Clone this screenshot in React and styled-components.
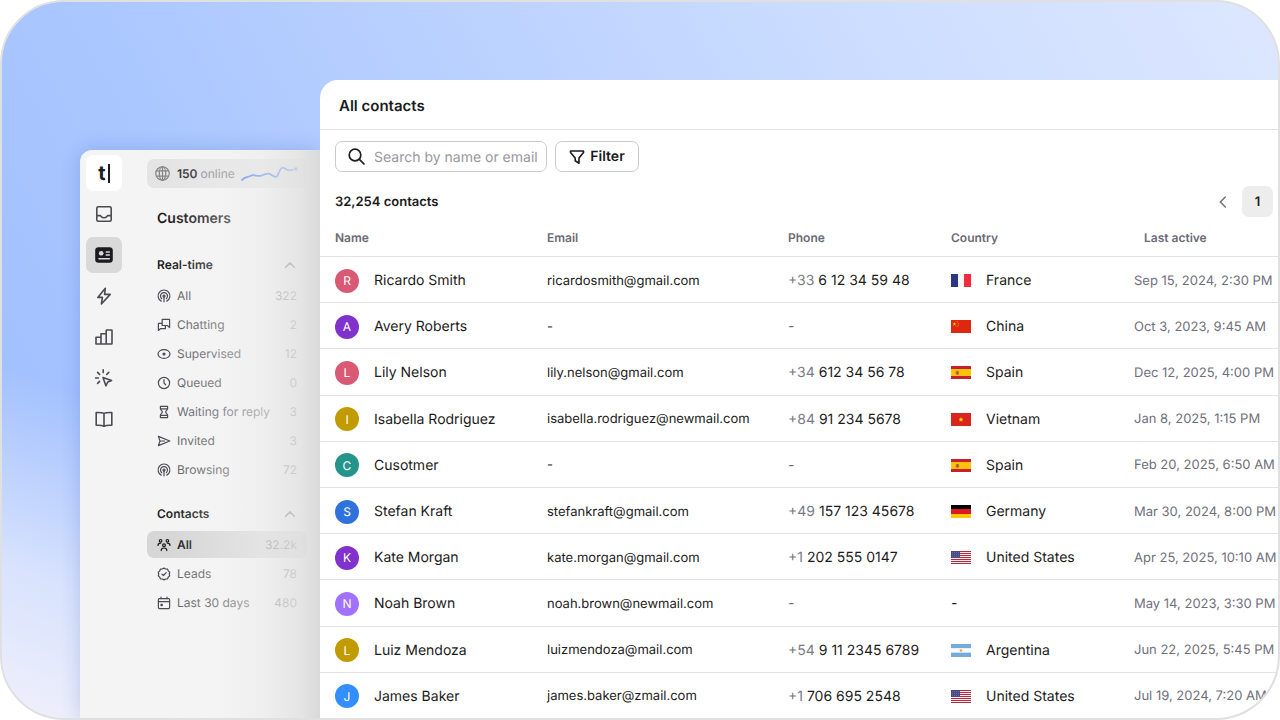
import React from "react";
import styled, { createGlobalStyle } from "styled-components";

const GlobalStyle = createGlobalStyle`
  * {
    box-sizing: border-box;
  }

  body {
    margin: 0;
    background: #ffffff;
    color: #1b1b20;
    font-family: Inter, "Liberation Sans", sans-serif;
    font-size: 14px;
    text-rendering: geometricPrecision;
  }

  button,
  input {
    font-family: inherit;
    text-rendering: inherit;
  }
`;

const Frame = styled.div`
  display: flex;
  height: 100vh;
  padding: 78px 0 0 78px;
  overflow: hidden;
  border: 2px solid #e0e0e0;
  border-radius: 64px;
  background: linear-gradient(
      200deg,
      rgba(238, 239, 251, 0) 70%,
      rgba(226, 233, 253, 0.85) 87%,
      #f0f0fb 100%
    ),
    linear-gradient(60deg, #a1c0ff 10%, #a9c6ff 27%, #cfdfff 78%, #dde7ff 100%);
`;

const Side = styled.aside`
  position: relative;
  display: flex;
  flex: 0 0 240px;
  gap: 25px;
  margin-top: 70px;
  padding-left: 6px;
  border-top-left-radius: 12px;
  background: #f4f4f4;
  box-shadow: 0 0 20px rgba(30, 60, 150, 0.2);

  /* shade thrown by the contacts panel */
  &::after {
    content: "";
    position: absolute;
    inset: 0;
    pointer-events: none;
    background: linear-gradient(
      90deg,
      rgba(244, 244, 244, 0) 36%,
      rgba(242, 242, 242, 0.3) 60%,
      rgba(236, 236, 236, 0.62) 76%,
      rgba(226, 226, 226, 0.84) 92%,
      rgba(216, 216, 216, 0.96) 100%
    );
  }
`;

const Rail = styled.nav`
  display: flex;
  flex-direction: column;
  gap: 5px;
  padding-top: 5px;
`;

const RailButton = styled.button`
  display: flex;
  align-items: center;
  justify-content: center;
  width: 36px;
  height: 36px;
  padding: 0;
  border: none;
  border-radius: 7px;
  color: #4c4c50;
  background: ${(props) => (props.$active ? "#d9d9d9" : "transparent")};
  cursor: pointer;
`;

const Logo = styled.a`
  display: flex;
  align-items: center;
  justify-content: center;
  gap: 2px;
  width: 36px;
  height: 36px;
  border-radius: 7px;
  background: #ffffff;
  color: #1b1b20;
  font-size: 20px;
  font-weight: 700;
  line-height: 24px;
  text-decoration: none;

  &::after {
    content: "";
    width: 2px;
    height: 19px;
    background: #1b1b20;
  }
`;

const Menu = styled.div`
  flex: 0 0 160px;
  padding-top: 9px;
`;

const Online = styled.div`
  display: flex;
  align-items: center;
  height: 29px;
  padding-left: 8px;
  border-radius: 7px;
  background: #e4e4e4;
  color: #85858a;
  font-size: 12px;
  white-space: nowrap;

  b {
    margin: 0 3px 0 7px;
    color: #2c2c30;
    font-weight: 600;
  }

  svg:last-child {
    margin-left: 6px;
  }
`;

const MenuTitle = styled.h2`
  margin: 21px 10px 26px;
  font-size: 14px;
  font-weight: 600;
  line-height: 20px;
`;

const GroupHead = styled.h3`
  display: flex;
  align-items: center;
  justify-content: space-between;
  margin: 21px 10px 7px;
  font-size: 12px;
  font-weight: 600;
  line-height: 20px;
`;

const FoldButton = styled.button`
  display: flex;
  padding: 0;
  border: none;
  background: none;
  color: #4c4c50;
  cursor: pointer;
`;

const List = styled.ul`
  display: flex;
  flex-direction: column;
  gap: 2px;
  margin: 0;
  padding: 0;
  list-style: none;
`;

const Item = styled.a`
  display: flex;
  align-items: center;
  gap: 6px;
  height: 27px;
  padding: 0 10px;
  border-radius: 7px;
  background: ${(props) => (props.$active ? "#d6d6d6" : "transparent")};
  color: ${(props) => (props.$active ? "#1b1b20" : "#5e5e64")};
  font-size: 12px;
  font-weight: ${(props) => (props.$active ? 600 : 400)};
  text-decoration: none;
  white-space: nowrap;

  svg {
    flex: none;
    color: ${(props) => (props.$active ? "#1b1b20" : "#4a4a55")};
  }
`;

const Count = styled.span`
  margin-left: auto;
  color: #6f6f75;
  font-weight: 400;
`;

const Panel = styled.main`
  position: relative;
  display: flex;
  flex: 1;
  flex-direction: column;
  min-width: 0;
  border-top-left-radius: 18px;
  background: #ffffff;
`;

const PanelHeader = styled.header`
  flex: none;
  padding: 14px 19px 11px;
  border-bottom: 1px solid #e3e3e3;

  h1 {
    margin: 0;
    font-size: 15px;
    font-weight: 600;
    line-height: 24px;
  }
`;

const Toolbar = styled.div`
  display: flex;
  flex: none;
  gap: 8px;
  padding: 11px 15px 0;
`;

const SearchBox = styled.label`
  display: flex;
  align-items: center;
  gap: 8px;
  width: 212px;
  height: 31px;
  padding: 0 8px 0 11px;
  border: 1px solid #cbcbce;
  border-radius: 7px;
`;

const SearchInput = styled.input`
  flex: 1;
  min-width: 0;
  padding: 1px 0 0;
  border: none;
  outline: none;
  background: none;
  font-size: 14px;

  &::placeholder {
    color: #97979e;
    opacity: 1;
  }
`;

const FilterButton = styled.button`
  display: flex;
  align-items: center;
  justify-content: center;
  gap: 5px;
  width: 84px;
  height: 31px;
  padding: 0;
  border: 1px solid #cbcbce;
  border-radius: 7px;
  background: #ffffff;
  color: #1b1b20;
  font-size: 14px;
  font-weight: 600;
  cursor: pointer;
`;

const Summary = styled.div`
  display: flex;
  flex: none;
  align-items: center;
  justify-content: space-between;
  margin-top: 14px;
  padding: 0 5px 0 15px;

  strong {
    font-size: 13px;
    font-weight: 600;
  }
`;

const Pager = styled.div`
  display: flex;
  align-items: center;
  gap: 4px;
`;

const PageButton = styled.button`
  display: flex;
  align-items: center;
  justify-content: center;
  width: 31px;
  height: 31px;
  padding: 0;
  border: none;
  border-radius: 7px;
  background: ${(props) => (props.$active ? "#ededed" : "transparent")};
  color: ${(props) => (props.$active ? "#1b1b20" : "#77777c")};
  font-size: 13px;
  font-weight: 600;
  cursor: pointer;
`;

const Table = styled.table`
  flex: 1;
  width: 100%;
  margin-bottom: -1px;
  table-layout: fixed;
  border-collapse: separate;
  border-spacing: 0;
  white-space: nowrap;
`;

const HeadCell = styled.th`
  width: ${(props) => props.$width || "auto"};
  height: 40px;
  padding: 2px 0 0 ${(props) => props.$indent || 0};
  border-bottom: 1px solid #e3e3e3;
  color: #6a6a76;
  font-size: 12px;
  font-weight: 600;
  text-align: left;
`;

const Cell = styled.td`
  height: 46px;
  padding: 2px 0 0 ${(props) => props.$indent || 0};
  border-bottom: 1px solid #e3e3e3;
  color: ${(props) => (props.$muted ? "#6f6f7b" : "#1b1b20")};
  font-size: ${(props) => (props.$compact ? "13px" : "14px")};
`;

const Person = styled.div`
  display: flex;
  align-items: center;
  gap: 15px;
`;

const Avatar = styled.span`
  display: flex;
  flex: none;
  align-items: center;
  justify-content: center;
  width: 24px;
  height: 24px;
  border-radius: 50%;
  background: ${(props) => props.$color};
  color: #ffffff;
  font-size: 12px;
  font-weight: 400;
`;

const Prefix = styled.span`
  color: #7a7a85;
`;

const Icon = ({ size = 20, box = 20, width = 1.6, children }) => (
  <svg
    width={size}
    height={size}
    viewBox={`0 0 ${box} ${box}`}
    fill="none"
    stroke="currentColor"
    strokeWidth={width}
    strokeLinecap="round"
    strokeLinejoin="round"
    aria-hidden="true"
  >
    {children}
  </svg>
);

const railItems = [
  {
    label: "Inbox",
    icon: (
      <>
        <rect x="2.8" y="2.8" width="14.4" height="14.4" rx="1.5" />
        <path d="M3 11.6h3.2c.8 0 .9 2.2 3.8 2.2s3-2.2 3.8-2.2H17" />
      </>
    ),
  },
  {
    label: "Customers",
    active: true,
    icon: (
      <>
        <rect x="2" y="3" width="16" height="14" rx="2.5" fill="#1b1b20" stroke="#1b1b20" />
        <circle cx="7.2" cy="8.3" r="2.3" fill="#d9d9d9" stroke="none" />
        <path d="M12.3 7h3M12.3 10h3M5 13.7h10.3" stroke="#d9d9d9" />
      </>
    ),
  },
  {
    label: "Automations",
    icon: <path d="M11.3 2.2 3.8 11.4h4.6l-1 6.6 8.8-9.6h-5.6z" />,
  },
  {
    label: "Reports",
    icon: (
      <path d="M2 17V10.2h5V17M7 10.2V6.8h5.2V17M12.2 6.8V3.6c0-.4.2-.6.6-.6h4.6c.4 0 .6.2.6.6v12.8c0 .4-.2.6-.6.6H2.6c-.4 0-.6-.2-.6-.6" />
    ),
  },
  {
    label: "Engage",
    icon: (
      <>
        <path d="M9.2 1.8v2.8M1.6 10h2.8M3.6 4.4l2 2M5.6 13.4l-2 2M14.8 4.4l-2 2" />
        <path d="m9 9.4 8.6 3-3.8 1.6-1.9 3.8z" />
      </>
    ),
  },
  {
    label: "Knowledge base",
    icon: (
      <path d="M10 4.6C8.6 3.5 6.8 3.4 2.2 3.5v12.8c4.2-.2 6.4.1 7.8 1 1.4-.9 3.6-1.2 7.8-1V3.5c-4.6-.1-6.4 0-7.8 1.1zm0 0v12.6" />
    ),
  },
];

const Radar = () => (
  <>
    <path d="M4.2 12.1a5.9 5.9 0 1 1 5.6 0" />
    <path d="M4.7 9.7a3.5 3.5 0 1 1 4.7-.1" />
    <circle cx="7" cy="7.1" r="1" />
    <path d="M7 8.2v4.6" />
  </>
);

const menuGroups = [
  {
    title: "Real-time",
    items: [
      { label: "All", count: "322", icon: <Radar /> },
      {
        label: "Chatting",
        count: "2",
        icon: (
          <path d="M5.2 1.4h7.4v8.2L10.4 7.5H5.2zM5 5.4H1.4v7.1l2-1.8h5V8" />
        ),
      },
      {
        label: "Supervised",
        count: "12",
        icon: (
          <>
            <ellipse cx="7" cy="7" rx="6" ry="4.4" />
            <circle cx="7" cy="7" r="1" fill="currentColor" />
          </>
        ),
      },
      {
        label: "Queued",
        count: "0",
        icon: (
          <>
            <circle cx="7" cy="7" r="5.6" />
            <path d="M7 3.7V7l1.7 1.9" />
          </>
        ),
      },
      {
        label: "Waiting for reply",
        count: "3",
        icon: (
          <path d="M3.4 1.4h7.2v2.4c0 1.4-2 2.2-2 3.2s2 1.8 2 3.2v2.4H3.4v-2.4c0-1.4 2-2.2 2-3.2s-2-1.8-2-3.2zM3.4 3.8h7.2M3.4 10.4h7.2" />
        ),
      },
      {
        label: "Invited",
        count: "3",
        icon: <path d="M1.4 2.4 12.8 7 1.4 11.6 3 7zM3 7h4.6" />,
      },
      { label: "Browsing", count: "72", icon: <Radar /> },
    ],
  },
  {
    title: "Contacts",
    items: [
      {
        label: "All",
        count: "32.2k",
        active: true,
        icon: (
          <>
            <circle cx="3.6" cy="2.8" r="1.3" />
            <circle cx="10.4" cy="2.8" r="1.3" />
            <circle cx="7" cy="7.2" r="1.4" />
            <path d="M1 7.4c0-1.4 1-2.2 2.6-2.2M13 7.4c0-1.4-1-2.2-2.6-2.2M4.2 12.6c0-1.6 1-2.6 2.8-2.6s2.8 1 2.8 2.6" />
          </>
        ),
      },
      {
        label: "Leads",
        count: "78",
        icon: (
          <>
            <path d="M7 1.1 8.7 2l1.9.2.7 1.7 1.4 1.3L12.3 7l.4 1.8-1.4 1.3-.7 1.7-1.9.2L7 12.9 5.3 12l-1.9-.2-.7-1.7-1.4-1.3L1.7 7l-.4-1.8 1.4-1.3.7-1.7L5.3 2z" />
            <path d="m4.9 7.1 1.5 1.4 2.8-2.8" />
          </>
        ),
      },
      {
        label: "Last 30 days",
        count: "480",
        icon: (
          <>
            <rect x="1.4" y="2.6" width="11.2" height="10" rx="1" />
            <path d="M1.4 5.7h11.2M4 1v1.6M10 1v1.6" />
            <rect x="4" y="8.4" width="1.2" height="1.2" />
          </>
        ),
      },
    ],
  },
];

const Stripes = ({ colors }) =>
  colors.map((color, i) => (
    <rect
      key={i}
      y={(13 / colors.length) * i}
      width="20"
      height={13 / colors.length}
      fill={color}
    />
  ));

const STAR = "M0-2 .5-.6H2L.8.2l.4 1.5L0 .8l-1.2.9.4-1.5L-2-.6h1.5z";

const flags = {
  France: (
    <>
      <rect width="20" height="13" fill="#f5f5f5" />
      <rect width="7" height="13" fill="#293784" />
      <rect x="13" width="7" height="13" fill="#ef2b3c" />
    </>
  ),
  China: (
    <>
      <rect width="20" height="13" fill="#df2710" />
      <path d={STAR} transform="translate(3.4 4)" fill="#fcd600" />
      <g fill="#f2a80c">
        <circle cx="6.2" cy="1.8" r=".5" />
        <circle cx="7.4" cy="3.2" r=".5" />
        <circle cx="7.4" cy="4.9" r=".5" />
        <circle cx="6.2" cy="6.2" r=".5" />
      </g>
    </>
  ),
  Spain: (
    <>
      <rect width="20" height="13" fill="#c8202c" />
      <rect y="3" width="20" height="7" fill="#fdc20c" />
      <rect x="4.6" y="5" width="3.6" height="3.8" rx="1" fill="#c77a35" />
      <path d="M6.4 5.2v3" stroke="#9a4a3c" strokeWidth="1" />
    </>
  ),
  Vietnam: (
    <>
      <rect width="20" height="13" fill="#db241d" />
      <path d={STAR} transform="translate(10 6.6)" fill="#ffee00" stroke="#ffee00" strokeWidth=".4" />
    </>
  ),
  Germany: (
    <>
      <rect width="20" height="13" fill="#000000" />
      <rect y="4" width="20" height="5" fill="#dd1a22" />
      <rect y="9" width="20" height="4" fill="#ffc800" />
    </>
  ),
  "United States": (
    <>
      <rect width="20" height="13" fill="#f6eeee" />
      <path
        d="M0 .5h20M0 2.5h20M0 4.5h20M0 6.5h20M0 8.5h20M0 10.5h20M0 12.5h20"
        stroke="#b22a3d"
      />
      <rect width="9" height="7" fill="#474a80" />
      <path d="M1 1.5h7M1 3.5h7M1 5.5h7" stroke="#7d80aa" strokeWidth=".7" strokeDasharray="1 1" />
    </>
  ),
  Argentina: (
    <>
      <Stripes colors={["#74aade", "#f7f9fb", "#74aade"]} />
      <circle cx="10" cy="6.5" r="1.3" fill="#eda83a" />
    </>
  ),
};

const contacts = [
  { name: "Ricardo Smith", email: "ricardosmith@gmail.com", prefix: "+33", phone: "6 12 34 59 48", country: "France", active: "Sep 15, 2024, 2:30 PM", color: "#d85a74" },
  { name: "Avery Roberts", country: "China", active: "Oct 3, 2023, 9:45 AM", color: "#8132cc" },
  { name: "Lily Nelson", email: "lily.nelson@gmail.com", prefix: "+34", phone: "612 34 56 78", country: "Spain", active: "Dec 12, 2025, 4:00 PM", color: "#d85a74" },
  { name: "Isabella Rodriguez", email: "isabella.rodriguez@newmail.com", prefix: "+84", phone: "91 234 5678", country: "Vietnam", active: "Jan 8, 2025, 1:15 PM", color: "#c29b00" },
  { name: "Cusotmer", country: "Spain", active: "Feb 20, 2025, 6:50 AM", color: "#25958c" },
  { name: "Stefan Kraft", email: "stefankraft@gmail.com", prefix: "+49", phone: "157 123 45678", country: "Germany", active: "Mar 30, 2024, 8:00 PM", color: "#2f72dc" },
  { name: "Kate Morgan", email: "kate.morgan@gmail.com", prefix: "+1", phone: "202 555 0147", country: "United States", active: "Apr 25, 2025, 10:10 AM", color: "#8132cc" },
  { name: "Noah Brown", email: "noah.brown@newmail.com", active: "May 14, 2023, 3:30 PM", color: "#a172ff" },
  { name: "Luiz Mendoza", email: "luizmendoza@mail.com", prefix: "+54", phone: "9 11 2345 6789", country: "Argentina", active: "Jun 22, 2025, 5:45 PM", color: "#c29b00" },
  { name: "James Baker", email: "james.baker@zmail.com", prefix: "+1", phone: "706 695 2548", country: "United States", active: "Jul 19, 2024, 7:20 AM", color: "#338eff" },
];

const Sidebar = () => (
  <Side>
    <Rail aria-label="Sections">
      <Logo href="#home">t</Logo>
      {railItems.map((item) => (
        <RailButton key={item.label} $active={item.active} aria-label={item.label}>
          <Icon>{item.icon}</Icon>
        </RailButton>
      ))}
    </Rail>
    <Menu>
      <Online>
        <Icon size={15} box={16} width={1.3}>
          <circle cx="8" cy="8" r="7.2" />
          <ellipse cx="8" cy="8" rx="3.4" ry="7.2" />
          <path d="M8 .8v14.4M1.6 5.2h12.8M1.6 10.8h12.8" />
        </Icon>
        <b>150</b>
        online
        <svg width="58" height="18" viewBox="0 0 58 18" fill="none" aria-hidden="true">
          <path
            d="M1 15c2-2.4 4-3 6-3.2s3-1.8 5.5-1.6 5 1.4 8 .4 5-2.4 7.5-1.9 4.5 3.8 7 3.2 3.5-9 6.5-9.2 4 3 7 2.7 2.5-.6 3.5-.7"
            stroke="#2f6fed"
            strokeWidth="1.8"
            strokeLinecap="round"
          />
          <circle cx="55" cy="4" r="1.7" fill="#2f6fed" />
        </svg>
      </Online>
      <MenuTitle>Customers</MenuTitle>
      {menuGroups.map((group) => (
        <section key={group.title}>
          <GroupHead>
            {group.title}
            <FoldButton aria-label={`Collapse ${group.title}`}>
              <Icon size={14} box={12} width={1.3}>
                <path d="m2.3 8 3.7-3.8L9.7 8" />
              </Icon>
            </FoldButton>
          </GroupHead>
          <List>
            {group.items.map((item) => (
              <li key={item.label}>
                <Item href="#contacts" $active={item.active}>
                  <Icon size={14} box={14} width={1.2}>
                    {item.icon}
                  </Icon>
                  {item.label}
                  <Count>{item.count}</Count>
                </Item>
              </li>
            ))}
          </List>
        </section>
      ))}
    </Menu>
  </Side>
);

const ContactRow = ({ contact }) => (
  <tr>
    <Cell $indent="15px">
      <Person>
        <Avatar $color={contact.color}>{contact.name[0]}</Avatar>
        {contact.name}
      </Person>
    </Cell>
    <Cell $compact>{contact.email || "-"}</Cell>
    <Cell $muted={!contact.phone}>
      {contact.phone ? (
        <>
          <Prefix>{contact.prefix}</Prefix> {contact.phone}
        </>
      ) : (
        "-"
      )}
    </Cell>
    <Cell>
      {contact.country ? (
        <Person>
          <svg width="20" height="13" viewBox="0 0 20 13" aria-hidden="true">
            {flags[contact.country]}
          </svg>
          {contact.country}
        </Person>
      ) : (
        "-"
      )}
    </Cell>
    <Cell $muted $compact>
      {contact.active}
    </Cell>
  </tr>
);

const App = () => (
  <>
    <GlobalStyle />
    <Frame>
      <Sidebar />
      <Panel>
        <PanelHeader>
          <h1>All contacts</h1>
        </PanelHeader>
        <Toolbar>
          <SearchBox>
            <Icon size={19} box={19} width={1.7}>
              <circle cx="8" cy="8" r="5.8" />
              <path d="m12.4 12.4 4.6 4.6" />
            </Icon>
            <SearchInput
              type="text"
              aria-label="Search contacts"
              placeholder="Search by name or email"
            />
          </SearchBox>
          <FilterButton>
            <Icon size={16} box={16} width={1.6}>
              <path d="M1.5 2h13v1.5L10 9v5.2L6.2 11.8V9L1.5 3.5z" />
            </Icon>
            Filter
          </FilterButton>
        </Toolbar>
        <Summary>
          <strong>32,254 contacts</strong>
          <Pager>
            <PageButton aria-label="Previous page">
              <Icon size={14} box={14} width={1.6}>
                <path d="M9.3 2 4.3 7l5 5" />
              </Icon>
            </PageButton>
            <PageButton $active>1</PageButton>
          </Pager>
        </Summary>
        <Table>
          <thead>
            <tr>
              <HeadCell $width="227px" $indent="15px">Name</HeadCell>
              <HeadCell $width="241px">Email</HeadCell>
              <HeadCell $width="163px">Phone</HeadCell>
              <HeadCell $width="183px">Country</HeadCell>
              <HeadCell $indent="10px">Last active</HeadCell>
            </tr>
          </thead>
          <tbody>
            {contacts.map((contact) => (
              <ContactRow key={contact.name} contact={contact} />
            ))}
          </tbody>
        </Table>
      </Panel>
    </Frame>
  </>
);

export default App;
